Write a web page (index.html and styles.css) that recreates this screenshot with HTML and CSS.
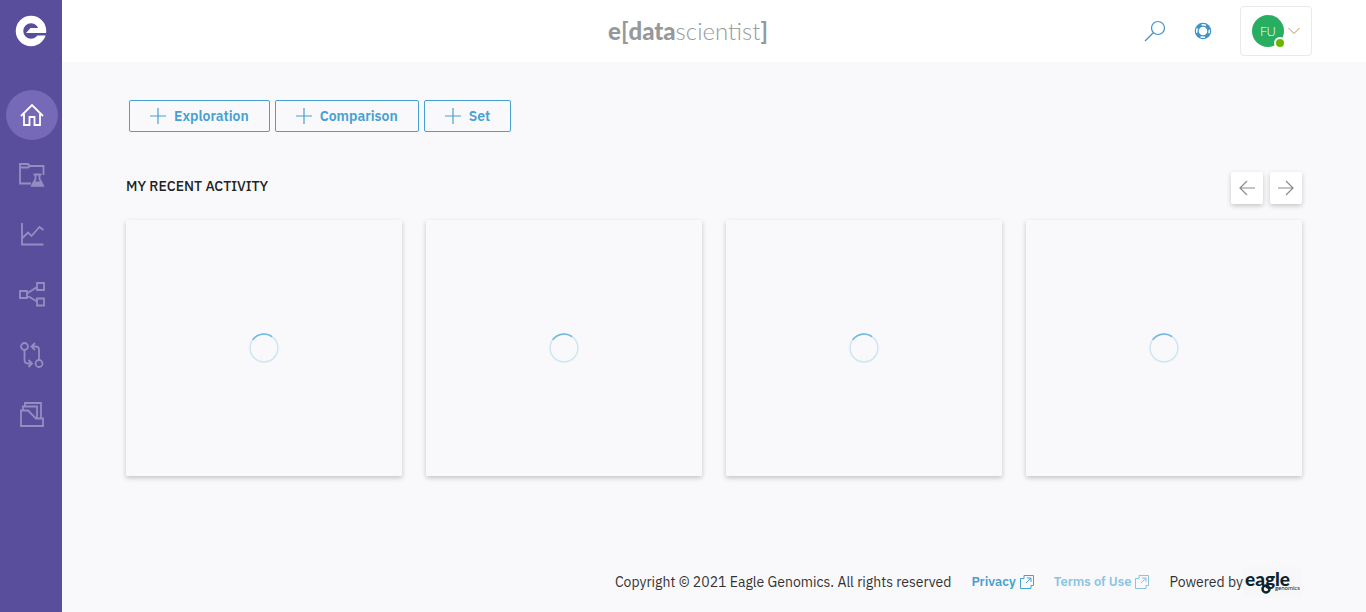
FILE: index.html
```html
<!DOCTYPE html>
<html lang="en">
<head>
<meta charset="utf-8">
<meta name="viewport" content="width=device-width, initial-scale=1">
<title>e[datascientist]</title>
<link rel="stylesheet" href="styles.css">
</head>
<body>
<div class="app">
  <aside class="sidebar">
    <a class="brand" href="#" aria-label="Eagle Genomics">
      <svg width="32" height="32" viewBox="0 0 32 32"><circle cx="16" cy="16" r="11.500" fill="none" stroke="#fff" stroke-width="7.500"/><path d="M11 18l4.500-5H25v5z" fill="#fff"/><path d="M11 18h21v2.500H11z" fill="#594e9b"/></svg>
    </a>
    <nav class="nav" aria-label="Main">
      <a class="nav-link active" href="#" aria-label="Home"><svg width="26" height="26" viewBox="0 0 26 26"><path d="M2 14L13 3l11 11M5 12v11h5.500v-8h5v8H21V12"/></svg></a>
      <a class="nav-link" href="#" aria-label="Projects"><svg width="26" height="26" viewBox="0 0 26 26"><path d="M12 21.500H1V2h8l2 2h13.500v9M1 5.500h8l2-1.500"/><path d="M14.500 12.500h8M16.500 13v4l-3.500 6.500h11L20.500 17v-4"/><path class="solid" d="M14.500 19.500h8l2.500 5H12z"/></svg></a>
      <a class="nav-link" href="#" aria-label="Charts"><svg width="26" height="26" viewBox="0 1 26 26"><path d="M3 2v21.500h21.500M3 17.500l6-6 3.500 3.500 8-9L24.500 9"/></svg></a>
      <a class="nav-link" href="#" aria-label="Networks"><svg width="26" height="26" viewBox="0 1 26 26"><path d="M1 10h7v7H1zM18 2h7v7h-7zM18 17.500h7v7h-7zM8 12.500L18 6M8 14.500l10 6"/></svg></a>
      <a class="nav-link" href="#" aria-label="Compare"><svg width="26" height="26" viewBox="0 0 26 26"><circle cx="5.500" cy="4.500" r="3.500"/><circle cx="20" cy="21.500" r="3.500"/><path d="M5.500 8v10q0 3.500 3.500 3.500h3.500M9.500 18l3.500 3.500L9.500 25M20 18V8q0-3.500-3.500-3.500H13M16 1l-3.500 3.500L16 8"/></svg></a>
      <a class="nav-link" href="#" aria-label="Files"><svg width="26" height="26" viewBox="0 1 26 26"><path d="M2 9.500h7l8 8h7V25H2zM4 9.500v-4h14v12M6 5.500V2h16v15.500"/></svg></a>
    </nav>
  </aside>
  <div class="page">
    <header class="topbar">
      <h1 class="wordmark"><b>e</b><span class="bracket">[</span><b>data</b>scientist<span class="bracket">]</span></h1>
      <div class="tools">
        <button class="icon-button" aria-label="Search"><svg width="22" height="22" viewBox="0 0 22 22"><circle cx="14" cy="8" r="6.500"/><path d="M9.500 12.500L1 21"/></svg></button>
        <button class="icon-button" aria-label="Help"><svg width="18" height="18" viewBox="0 0 18 18"><circle cx="9" cy="9" r="6.250" stroke-width="4"/><circle cx="9" cy="9" r="6.250" stroke="#fff" stroke-width="1.500" stroke-dasharray="4.600 5.217" stroke-dashoffset="2.300"/></svg></button>
        <button class="account" aria-label="Account menu"><span class="avatar">FU<i class="status"></i></span><svg width="12" height="8" viewBox="0 0 12 8"><path d="M.5 1L6 6.500 11.500 1"/></svg></button>
      </div>
    </header>
    <main class="content">
      <div class="actions">
        <button class="create"><svg width="16" height="16" viewBox="0 0 16 16"><path d="M8 0v16M0 8h16"/></svg>Exploration</button>
        <button class="create"><svg width="16" height="16" viewBox="0 0 16 16"><path d="M8 0v16M0 8h16"/></svg>Comparison</button>
        <button class="create"><svg width="16" height="16" viewBox="0 0 16 16"><path d="M8 0v16M0 8h16"/></svg>Set</button>
      </div>
      <section>
        <div class="section-head">
          <h2>MY RECENT ACTIVITY</h2>
          <div class="pager">
            <button aria-label="Previous"><svg width="16" height="16" viewBox="0 0 16 16"><path d="M16 8H.5M8 1L1 8l7 7"/></svg></button>
            <button aria-label="Next"><svg width="16" height="16" viewBox="0 0 16 16"><path d="M0 8h15.500M8 1l7 7-7 7"/></svg></button>
          </div>
        </div>
        <div class="cards">
          <article class="card"><svg class="spinner" viewBox="0 0 28 28"><circle cx="14" cy="14" r="13"/><path d="M3.500 6.300A13 13 0 0 1 21.500 3.300"/></svg></article>
          <article class="card"><svg class="spinner" viewBox="0 0 28 28"><circle cx="14" cy="14" r="13"/><path d="M3.500 6.300A13 13 0 0 1 21.500 3.300"/></svg></article>
          <article class="card"><svg class="spinner" viewBox="0 0 28 28"><circle cx="14" cy="14" r="13"/><path d="M3.500 6.300A13 13 0 0 1 21.500 3.300"/></svg></article>
          <article class="card"><svg class="spinner" viewBox="0 0 28 28"><circle cx="14" cy="14" r="13"/><path d="M3.500 6.300A13 13 0 0 1 21.500 3.300"/></svg></article>
        </div>
      </section>
    </main>
    <footer class="footer">
      <span class="copyright">Copyright © 2021 Eagle Genomics. All rights reserved</span>
      <a href="#">Privacy<svg width="14" height="14" viewBox="0 0 14 14"><path d="M4 3.500V.5h9.500v10H11v3H.5v-10H4M6 8l5-5M7 3h4v4"/></svg></a>
      <a class="faded" href="#">Terms of Use<svg width="14" height="14" viewBox="0 0 14 14"><path d="M4 3.500V.5h9.500v10H11v3H.5v-10H4M6 8l5-5M7 3h4v4"/></svg></a>
      <span class="powered">Powered by<span class="eagle"><b>eagle</b><small>genomics</small><svg width="10" height="10" viewBox="0 0 10 10"><circle cx="5" cy="5" r="3.500"/></svg></span></span>
    </footer>
  </div>
</div>
</body>
</html>
```
FILE: styles.css
```css
* { box-sizing: border-box; }
body { margin: 0; background: #f9f9fc; color: #333; font: 13px/20px "IBM Plex Sans", "Noto Sans", sans-serif; }
button { font: inherit; padding: 0; cursor: pointer; }
svg { fill: none; stroke: currentColor; flex: none; }
a { color: #46a0d0; text-decoration: none; }
.app { display: flex; min-height: 100vh; }

.sidebar { width: 62px; flex: none; background: #594e9b; display: flex; flex-direction: column; align-items: center; }
.brand { height: 62px; display: flex; align-items: center; }
.brand svg { stroke: none; }
.nav { align-self: stretch; margin-top: 28px; padding-left: 6px; display: flex; flex-direction: column; gap: 10px; }
.nav-link { width: 52px; height: 50px; border-radius: 50%; display: flex; align-items: center; justify-content: center; color: #958dc2; }
.nav-link svg { stroke-width: 1.8; }
.nav-link .solid { fill: currentColor; stroke: none; }
.nav-link.active { background: #7669b8; color: #fff; }

.page { flex: 1; min-width: 0; display: flex; flex-direction: column; }
.topbar { height: 62px; background: #fff; display: grid; grid-template-columns: 1fr auto 1fr; align-items: center; padding: 0 54px; }
.wordmark { grid-column: 2; margin: 0; padding-right: 52px; display: flex; align-items: center; color: #95999c; font: 300 24px/28px Lato, sans-serif; }
.wordmark b { font-weight: 900; }
.bracket { font-weight: 700; }
.tools { grid-column: 3; justify-self: end; display: flex; align-items: center; gap: 28px; }
.icon-button { border: 0; background: none; color: #3f93c5; display: flex; }
.icon-button svg { stroke-width: 1.2; }
.account { width: 72px; height: 50px; background: #fff; border: 1px solid #e9e9e9; border-radius: 4px; display: flex; align-items: center; justify-content: center; gap: 4px; color: #bd9257; }
.avatar { position: relative; width: 32px; height: 32px; border-radius: 50%; background: #27ae60; color: #fff; font: 300 13px/32px "Open Sans", sans-serif; }
.status { position: absolute; right: -2px; bottom: -2px; width: 12px; height: 12px; border: 2px solid #fff; border-radius: 50%; background: #6bb700; }

.content { flex: 1; padding: 38px 64px 0; }
.actions { display: flex; gap: 5px; padding-left: 3px; }
.create { height: 32px; padding: 0 20px; display: flex; align-items: center; gap: 8px; border: 1px solid #46a0d0; border-radius: 2px; background: none; color: #46a0d0; font-size: 14px; font-weight: 600; }
.create svg { stroke-width: 1.2; }
.section-head { margin-top: 40px; display: flex; justify-content: space-between; }
h2 { margin: 4px 0 0; font-size: 14px; line-height: 20px; font-weight: 500; color: #222; }
.pager { display: flex; gap: 7px; }
.pager button { width: 32px; height: 32px; border: 0; border-radius: 2px; background: #fff; color: #8c8c8c; display: flex; align-items: center; justify-content: center; box-shadow: 0 2px 5px rgba(0,0,0,.2); }
.pager svg { stroke-width: 1.2; }
.cards { margin-top: 16px; display: grid; grid-template-columns: repeat(4, 1fr); gap: 24px; }
.card { height: 256px; display: flex; align-items: center; justify-content: center; border-radius: 1px; background: #f9f9fc; box-shadow: 0 2px 5px rgba(0,0,0,.22); }
.spinner { width: 30px; height: 30px; color: #d0e7f3; stroke-width: 1.5; }
.spinner path { stroke: #70b8de; }

.footer { padding: 0 64px 15px; display: flex; justify-content: flex-end; align-items: center; gap: 20px; }
.footer a { display: flex; align-items: center; gap: 4px; font-weight: 600; }
.footer .faded { color: #8bc4e1; }
.copyright, .powered { font-size: 14px; }
.powered { display: flex; align-items: center; }
.eagle { position: relative; width: 59px; height: 30px; padding-left: 2px; color: #0c2430; background: #f7f7f8; }
.eagle b { display: block; font: 900 19px/24px Lato, sans-serif; }
.eagle small { position: absolute; left: 32px; top: 17px; font: 6px/8px Lato, sans-serif; }
.eagle svg { position: absolute; left: 18px; top: 17px; stroke-width: 2.5; }
```
